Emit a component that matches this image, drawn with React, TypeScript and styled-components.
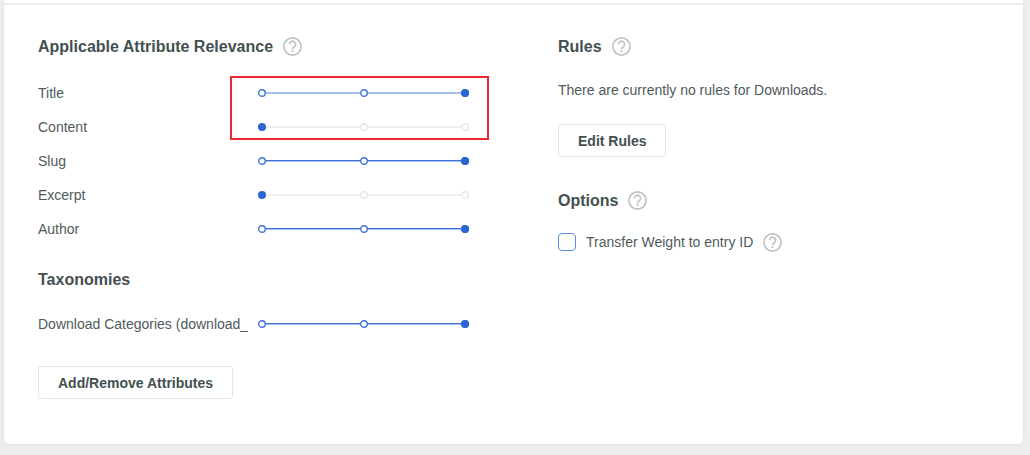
import React from "react";
import styled, { createGlobalStyle } from "styled-components";

const GlobalStyle = createGlobalStyle`
  * { box-sizing: border-box; }
  body {
    margin: 0;
    background: #eeeeef;
    color: #4f5b5b;
    font: 14px/20px "Liberation Sans", Arial, sans-serif;
  }
`;

const Page = styled.main`
  padding: 0 7px 11px 4px;
`;

const Card = styled.section`
  background: #fff;
  border-radius: 0 0 5px 5px;
  box-shadow: 0 1px 4px #dfe0ea;
`;

const CardTop = styled.div`
  height: 5px;
  border-bottom: 2px solid #ededf0;
`;

const Columns = styled.div`
  display: grid;
  grid-template-columns: 1fr 1fr;
  column-gap: 89px;
  padding: 30px 34px 45px;
`;

const Heading = styled.header<{ $top?: number }>`
  display: flex;
  align-items: center;
  gap: 10px;
  height: 23px;
  margin-top: ${(p) => p.$top ?? 0}px;
`;

const Title = styled.h2`
  margin: 0;
  color: #434f50;
  font-size: 16px;
  line-height: 20px;
`;

const HelpButton = styled.button`
  display: flex;
  padding: 0;
  border: 0;
  background: none;
  color: #bcc1c1;
`;

const Attributes = styled.div<{ $top: number }>`
  position: relative;
  margin-top: ${(p) => p.$top}px;
`;

const Row = styled.label`
  display: flex;
  align-items: center;
  gap: 10px;
  height: 34px;
`;

const RowLabel = styled.span`
  flex: 0 0 210px;
  overflow: hidden;
  white-space: nowrap;
`;

const Highlight = styled.div`
  position: absolute;
  top: 0;
  left: 192px;
  right: -20px;
  height: 64px;
  border: 2px solid #ea2a35;
  pointer-events: none;
`;

const SliderBox = styled.span`
  display: grid;
  flex: 1;
  align-items: center;
  > * { grid-area: 1 / 1; }
`;

const Track = styled.span<{ $color: string }>`
  height: 2px;
  margin: 0 4px;
  background: ${(p) => p.$color};
`;

const Stops = styled.span`
  display: flex;
  justify-content: space-between;
`;

const Range = styled.input`
  appearance: none;
  width: 100%;
  min-width: 0;
  height: 16px;
  margin: 0;
  background: transparent;
  &::-webkit-slider-thumb {
    appearance: none;
    width: 8px;
    height: 8px;
    border-radius: 50%;
    background: #2c66d2;
  }
`;

const Button = styled.button`
  display: block;
  height: 33px;
  padding: 0 19px;
  border: 1px solid #e3e5e5;
  border-radius: 3px;
  background: #fff;
  color: #434f50;
  font: bold 14px/20px "Liberation Sans", Arial, sans-serif;
`;

const Message = styled.p`
  margin: 22px 0 24px;
`;

const Option = styled.div`
  display: flex;
  align-items: center;
  gap: 10px;
  margin-top: 20px;
`;

const OptionLabel = styled.label`
  display: flex;
  align-items: center;
  gap: 10px;
`;

const Checkbox = styled.input`
  appearance: none;
  width: 18px;
  height: 18px;
  margin: 0;
  border: 1px solid #5f8ae4;
  border-radius: 4px;
  background: #fff;
`;

function Help({ topic }: { topic: string }) {
  return (
    <HelpButton type="button" aria-label={`Help: ${topic}`}>
      <svg width="19" height="19" viewBox="0 0 19 19" fill="none" stroke="currentColor">
        <circle cx="9.5" cy="9.5" r="8.6" strokeWidth="1.6" />
        <path d="M6.4 7.3a3.1 3.1 0 1 1 5 2.4c-1 .8-1.9 1.2-1.9 2.5" strokeWidth="1.6" />
        <path d="M9.5 13.3v1.8" strokeWidth="1.8" />
      </svg>
    </HelpButton>
  );
}

function Stop({ active }: { active: boolean }) {
  return (
    <svg width="8" height="8" viewBox="0 0 8 8">
      <circle cx="4" cy="4" r="3.3" fill="#fff" stroke={active ? "#3f74dc" : "#e6e6e6"} strokeWidth="1.4" />
    </svg>
  );
}

function Attribute({ name, value, line }: { name: string; value: number; line?: string }) {
  const active = value > 0;
  const color = line ?? (active ? "linear-gradient(#3b70d8 50%, #a9c1f0 50%)" : "#efefef");
  return (
    <Row>
      <RowLabel>{name}</RowLabel>
      <SliderBox>
        <Track $color={color} />
        <Stops>
          {[0, 1, 2].map((n) => (
            <Stop key={n} active={active} />
          ))}
        </Stops>
        <Range type="range" min={0} max={2} defaultValue={value} />
      </SliderBox>
    </Row>
  );
}

export default function App() {
  return (
    <>
      <GlobalStyle />
      <Page>
        <Card>
          <CardTop />
          <Columns>
            <div>
              <Heading>
                <Title>Applicable Attribute Relevance</Title>
                <Help topic="Applicable Attribute Relevance" />
              </Heading>
              <Attributes $top={18}>
                <Attribute name="Title" value={2} line="#a9c0ec" />
                <Attribute name="Content" value={0} />
                <Attribute name="Slug" value={2} />
                <Attribute name="Excerpt" value={0} />
                <Attribute name="Author" value={2} />
                <Highlight />
              </Attributes>
              <Heading $top={22}>
                <Title>Taxonomies</Title>
              </Heading>
              <Attributes $top={16}>
                <Attribute name="Download Categories (download_category)" value={2} />
              </Attributes>
              <Attributes $top={25}>
                <Button type="button">Add/Remove Attributes</Button>
              </Attributes>
            </div>
            <div>
              <Heading>
                <Title>Rules</Title>
                <Help topic="Rules" />
              </Heading>
              <Message>There are currently no rules for Downloads.</Message>
              <Button type="button">Edit Rules</Button>
              <Heading $top={32}>
                <Title>Options</Title>
                <Help topic="Options" />
              </Heading>
              <Option>
                <OptionLabel>
                  <Checkbox type="checkbox" />
                  Transfer Weight to entry ID
                </OptionLabel>
                <Help topic="Transfer Weight to entry ID" />
              </Option>
            </div>
          </Columns>
        </Card>
      </Page>
    </>
  );
}
